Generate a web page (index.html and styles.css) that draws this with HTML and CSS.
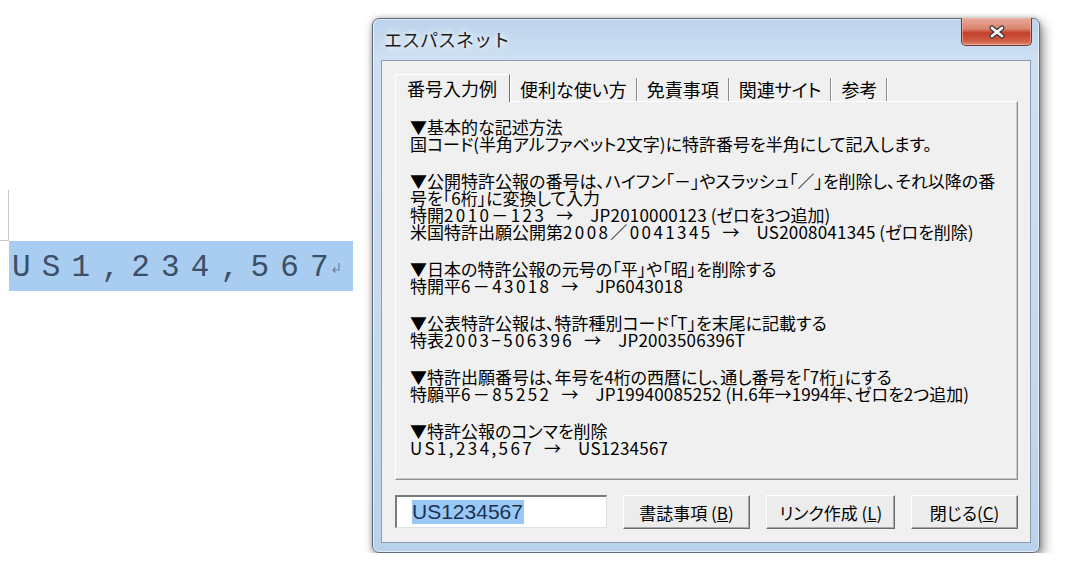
FILE: index.html
```html
<!DOCTYPE html>
<html lang="ja">
<head>
    <meta charset="UTF-8">
    <title>エスパスネット</title>
    <link rel="stylesheet" href="styles.css">
</head>
<body>
    <div class="desk">
        <div class="doc">
            <div class="corner"></div>
            <div class="sel">
                <span class="doctext">US1,234,567</span>
                <svg class="ret" width="10" height="12" viewBox="0 0 10 12">
                    <path d="M8 1 V8 H2 M4.5 5.5 L2 8 L4.5 10.5" fill="none" stroke="#6f8199" stroke-width="1.2"/>
                </svg>
            </div>
        </div>

        <div class="window">
            <div class="titlebar">
                <span class="title">エスパスネット</span>
                <button class="close">
                    <svg width="18" height="14" viewBox="0 0 18 14">
                        <path d="M4 3 L14 11 M14 3 L4 11" stroke="#3b3b3b" stroke-width="5" stroke-linecap="round"/>
                        <path d="M4 3 L14 11 M14 3 L4 11" stroke="#ffffff" stroke-width="2.6" stroke-linecap="round"/>
                    </svg>
                </button>
            </div>
            <div class="client">
                <div class="tabs">
                    <div class="tab active">番号入力例</div>
                    <div class="tab">便利な使い方</div>
                    <div class="tab">免責事項</div>
                    <div class="tab">関連サイト</div>
                    <div class="tab">参考</div>
                </div>
                <div class="panel">
                    <div class="sec">
                        <div>▼基本的な記述方法</div>
                        <div>国コード(半角アルファベット2文字)に特許番号を半角にして記入します。</div>
                    </div>
                    <div class="sec">
                        <div>▼公開特許公報の番号は、ハイフン「－」やスラッシュ「／」を削除し、それ以降の番</div>
                        <div>号を「6桁」に変換して入力</div>
                        <div>特開<span class="wd">2010－123</span><span class="ar">→</span><span class="nr">JP2010000123</span> (ゼロを3つ追加)</div>
                        <div>米国特許出願公開第<span class="wd">2008／0041345</span><span class="ar">→</span><span class="nr">US2008041345</span> (ゼロを削除)</div>
                    </div>
                    <div class="sec">
                        <div>▼日本の特許公報の元号の「平」や「昭」を削除する</div>
                        <div>特開平<span class="wd">6－43018</span><span class="ar">→</span><span class="nr">JP6043018</span></div>
                    </div>
                    <div class="sec">
                        <div>▼公表特許公報は、特許種別コード「T」を末尾に記載する</div>
                        <div>特表<span class="wd">2003−506396</span><span class="ar">→</span><span class="nr">JP2003506396T</span></div>
                    </div>
                    <div class="sec">
                        <div>▼特許出願番号は、年号を4桁の西暦にし、通し番号を「7桁」にする</div>
                        <div>特願平<span class="wd">6－85252</span><span class="ar">→</span><span class="nr">JP19940085252</span> (H.6年→1994年、ゼロを2つ追加)</div>
                    </div>
                    <div class="sec">
                        <div>▼特許公報のコンマを削除</div>
                        <div><span class="wd">US1,234,567</span><span class="ar">→</span><span class="nr">US1234567</span></div>
                    </div>
                </div>
                <div class="bottom">
                    <div class="field"><span class="hl">US1234567</span></div>
                    <button class="btn b1">書誌事項 (<u>B</u>)</button>
                    <button class="btn b2">リンク作成 (<u>L</u>)</button>
                    <button class="btn b3">閉じる(<u>C</u>)</button>
                </div>
            </div>
        </div>
    </div>
</body>
</html>
```

FILE: styles.css
```css
body {
    margin: 0;
    background: #ffffff;
    font-family: "Noto Sans CJK JP", "Noto Sans", sans-serif;
}
.desk {
    display: flex;
    align-items: flex-start;
}

/* word document on the left */
.doc {
    width: 372px;
    padding-top: 190px;
    flex-shrink: 0;
}
.corner {
    width: 8px;
    height: 50px;
    border-right: 1px solid #c6c6c6;
    border-bottom: 1px solid #c6c6c6;
}
.sel {
    margin-left: 9px;
    width: 344px;
    height: 50px;
    background: #a9cdf1;
    display: flex;
    align-items: center;
    padding-left: 3px;
    box-sizing: border-box;
}
.doctext {
    font-family: "Liberation Mono", monospace;
    font-size: 31px;
    letter-spacing: 11.2px;
    color: #3d4f67;
    margin-top: 2px;
}
.ret {
    margin-left: -9px;
    margin-top: 4px;
}

/* aero window */
.window {
    width: 668px;
    height: 535px;
    margin-top: 18px;
    box-sizing: border-box;
    border: 1px solid #5f6d7d;
    border-radius: 7px;
    padding: 0 8px 9px 8px;
    background: linear-gradient(to bottom, #bcd3ec 0%, #cde0f3 40px, #c6daef 60%, #b9d2ec 100%);
    box-shadow: 3px 5px 12px rgba(0, 0, 0, 0.45), 0 0 5px rgba(0, 0, 0, 0.25), inset 0 0 0 1px rgba(255, 255, 255, 0.55);
}
.titlebar {
    height: 41px;
    display: flex;
    justify-content: space-between;
    align-items: flex-start;
}
.title {
    font-size: 18px;
    line-height: 41px;
    padding-left: 3px;
    color: #1b1b1b;
    text-shadow: 0 0 6px #ffffff, 0 0 10px #ffffff;
}
.close {
    width: 71px;
    height: 28px;
    margin-top: -1px;
    margin-right: -1px;
    padding: 0;
    border: 1px solid #6e3a30;
    border-top: none;
    border-radius: 0 0 5px 5px;
    background: linear-gradient(to bottom, #e9aa9b 0%, #d98470 40%, #c2402a 55%, #cf5e44 85%, #dc8a72 100%);
    box-shadow: inset 0 0 0 1px rgba(255, 200, 190, 0.5);
    display: flex;
    align-items: center;
    justify-content: center;
}

.client {
    height: 483px;
    box-sizing: border-box;
    border: 1px solid #8c9cae;
    background: #f0f0f0;
    padding: 12px 12px 0 13px;
}

/* tab strip */
.tabs {
    display: flex;
    align-items: flex-end;
    height: 28px;
    font-size: 18px;
    font-feature-settings: "palt";
    color: #000;
}
.tab {
    height: 23px;
    line-height: 23px;
    padding: 0 9px;
    border-right: 1px solid #8a8a8a;
    box-shadow: 1px 0 0 #ffffff;
    margin-right: 1px;
}
.tab.active {
    height: 28px;
    line-height: 27px;
    padding: 0 12px 0 11px;
    border-top: 1px solid #ffffff;
    border-left: 1px solid #ffffff;
    border-right: 1px solid #6f6f6f;
    box-sizing: border-box;
    background: #f0f0f0;
    margin-bottom: -1px;
    position: relative;
    z-index: 1;
}

/* content panel */
.panel {
    height: 379px;
    box-sizing: border-box;
    border-top: 1px solid #ffffff;
    border-left: 1px solid #ffffff;
    border-right: 1px solid #8e8e8e;
    border-bottom: 1px solid #8e8e8e;
    box-shadow: inset -1px -1px 0 #c8c8c8;
    padding: 16px 0 0 14px;
    font-size: 17px;
    line-height: 17px;
    font-feature-settings: "palt";
    color: #000;
    white-space: nowrap;
}
.sec {
    margin-bottom: 20px;
}
.wd {
    letter-spacing: 2.4px;
}
.nr {
    letter-spacing: 0.2px;
}
.ar {
    margin: 0 17px 0 10px;
}

/* bottom row */
.bottom {
    display: flex;
    gap: 16px;
    margin-top: 15px;
}
.field {
    width: 212px;
    height: 33px;
    box-sizing: border-box;
    background: #ffffff;
    border-top: 2px solid #7a7a7a;
    border-left: 2px solid #7a7a7a;
    border-right: 1px solid #e2e2e2;
    border-bottom: 1px solid #e2e2e2;
    padding-left: 15px;
    display: flex;
    align-items: center;
}
.hl {
    background: #99c8f5;
    color: #1c3152;
    font-family: "Liberation Sans", Arial, sans-serif;
    font-size: 21px;
    line-height: 24px;
    padding-right: 1px;
}
.btn {
    height: 34px;
    box-sizing: border-box;
    background: #ececec;
    border-top: 1px solid #ffffff;
    border-left: 1px solid #ffffff;
    border-right: 1px solid #6a6a6a;
    border-bottom: 1px solid #6a6a6a;
    box-shadow: inset -1px -1px 0 #a8a8a8;
    font-family: "Noto Sans CJK JP", sans-serif;
    font-size: 17px;
    font-feature-settings: "palt";
    color: #000;
    padding: 0;
}
.b1 { width: 128px; }
.b2 { width: 129px; }
.b3 { width: 107px; }
```
